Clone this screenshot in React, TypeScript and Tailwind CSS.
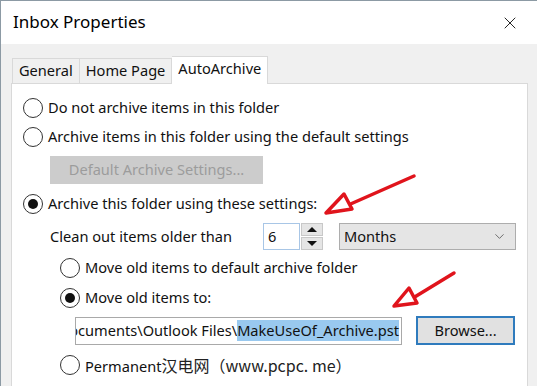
import { ChevronDown, X } from "lucide-react";

type RadioProps = {
  checked?: boolean;
  label: React.ReactNode;
  className?: string;
};

function Radio({ checked, label, className = "" }: RadioProps) {
  return (
    <div className={`flex items-center h-[28px] ${className}`}>
      <span className="w-[20px] h-[20px] rounded-full border border-[#333] bg-white flex items-center justify-center shrink-0">
        {checked && <span className="w-[10px] h-[10px] rounded-full bg-[#111]" />}
      </span>
      <span className="ml-[5px] whitespace-nowrap">{label}</span>
    </div>
  );
}

export default function App() {
  return (
    <div
      className="relative w-[537px] h-[386px] overflow-hidden bg-[#f0f0f0] border-t border-l border-[#8c9aa4] text-[14.6px] text-[#111]"
      style={{ fontFamily: '"Noto Sans", "Open Sans", sans-serif' }}
    >
      {/* title bar */}
      <div className="h-[43px] bg-white flex items-center justify-between pl-[12px] pr-[17px]">
        <span className="text-[17px] text-[#000] pb-[2px]">Inbox Properties</span>
        <X size={20} strokeWidth={1.1} className="text-[#111]" />
      </div>

      <div className="pl-[10px] pt-[11px] w-[527px]">
        {/* tabs */}
        <div className="flex items-end h-[28px] pl-[1px]">
          <div className="h-[25px] px-[6px] bg-[#f0f0f0] border border-b-0 border-[#d9d9d9] flex items-center">
            General
          </div>
          <div className="h-[25px] px-[6px] bg-[#f0f0f0] border border-b-0 border-l-0 border-[#d9d9d9] flex items-center">
            Home Page
          </div>
          <div className="h-[28px] px-[6px] bg-white border border-b-0 border-l-0 border-[#d9d9d9] flex items-center -mb-px relative z-10 pb-[3px]">
            AutoArchive
          </div>
        </div>

        {/* panel */}
        <div className="h-[320px] bg-white border border-[#d9d9d9] pl-[11px] pt-[10px]">
          <Radio label="Do not archive items in this folder" />
          <Radio label="Archive items in this folder using the default settings" className="mt-px" />
          <div className="ml-[27px] mt-[5px] w-[213px] h-[28px] bg-[#cccccc] text-[#9c9c9c] flex items-center justify-center">
            Default Archive Settings...
          </div>
          <Radio checked label="Archive this folder using these settings:" className="mt-[6px]" />

          <div className="flex items-center mt-[5px] h-[27px]">
            <span className="ml-[27px] w-[213px] whitespace-nowrap">Clean out items older than</span>
            <div className="w-[37px] h-[27px] border border-[#a8c6e6] flex items-center pl-[4px]">6</div>
            <div className="w-[22px] h-[27px] flex flex-col gap-px ml-px">
              <div className="flex-1 bg-[#e5e5e5] border border-[#c8c8c8] flex items-center justify-center">
                <span className="w-0 h-0 border-l-[5px] border-r-[5px] border-b-[5px] border-l-transparent border-r-transparent border-b-[#111]" />
              </div>
              <div className="flex-1 bg-[#e5e5e5] border border-[#c8c8c8] flex items-center justify-center">
                <span className="w-0 h-0 border-l-[5px] border-r-[5px] border-t-[5px] border-l-transparent border-r-transparent border-t-[#111]" />
              </div>
            </div>
            <div className="ml-[16px] w-[177px] h-[27px] bg-[#e5e5e5] border border-[#adadad] flex items-center justify-between pl-[4px] pr-[8px]">
              <span>Months</span>
              <ChevronDown size={15} strokeWidth={1.2} className="text-[#444]" />
            </div>
          </div>

          <div className="pl-[37px] mt-[4px]">
            <Radio label="Move old items to default archive folder" />
            <Radio checked label="Move old items to:" className="mt-[2px]" />
            <div className="flex items-center mt-[4px]">
              <div className="ml-[15px] w-[327px] h-[28px] border border-[#a9a9a9] flex items-center justify-end overflow-hidden pr-[2px] whitespace-nowrap">
                <span>ocuments\Outlook Files\</span>
                <span className="bg-[#99c9ef]">MakeUseOf_Archive.pst</span>
              </div>
              <div className="ml-[14px] w-[99px] h-[29px] bg-[#e1e1e1] border-2 border-[#2f7bbd] flex items-center justify-center">
                Browse...
              </div>
            </div>
            <Radio
              className="mt-[6px]"
              label={
                <>
                  Permanent
                  <span
                    className="text-[16px] text-[#222]"
                    style={{ fontFamily: '"Noto Sans CJK SC", "DejaVu Sans", sans-serif' }}
                  >
                    汉电网（www.pcpc. me）
                  </span>
                </>
              }
            />
          </div>
        </div>
      </div>

      {/* red annotation arrows */}
      <svg className="absolute left-0 top-0 pointer-events-none" width="537" height="386">
        <g stroke="#e0141c" strokeWidth="3.5" strokeLinecap="round" fill="none">
          <line x1="413" y1="175" x2="345" y2="205" />
          <polygon points="325,212 343,193 351,208" fill="#fff" strokeLinejoin="round" />
          <line x1="453" y1="272" x2="412" y2="297" />
          <polygon points="393,305 408,287 416,302" fill="#fff" strokeLinejoin="round" />
        </g>
      </svg>
    </div>
  );
}
